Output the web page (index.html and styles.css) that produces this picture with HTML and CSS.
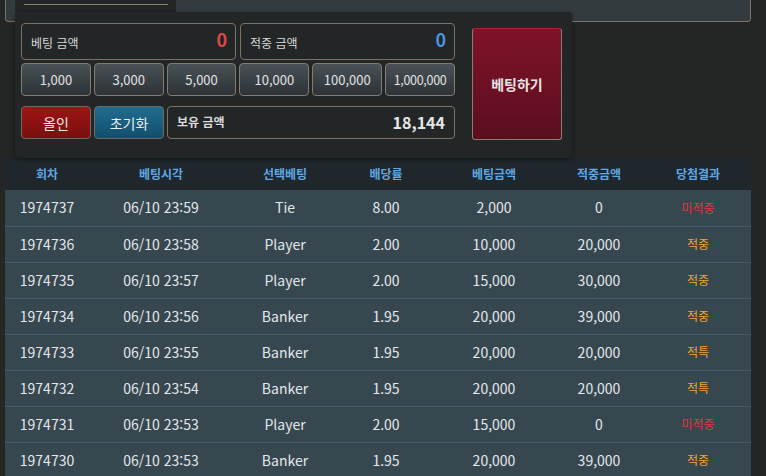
FILE: index.html
```html
<!DOCTYPE html>
<html lang="ko">
<head>
    <meta charset="UTF-8">
    <title>Betting</title>
    <link rel="stylesheet" href="styles.css">
</head>
<body>

<!-- Top strip (game area, cut off) -->
<div class="top-strip">
    <div class="top-tab"><div class="tab-line"></div></div>
</div>

<!-- Betting panel -->
<div class="bet-panel">
    <div class="bet-controls">
        <div class="amount-row">
            <div class="amount-box">
                <span class="amount-label">베팅 금액</span>
                <span class="amount-value red">0</span>
            </div>
            <div class="amount-box">
                <span class="amount-label">적중 금액</span>
                <span class="amount-value blue">0</span>
            </div>
        </div>
        <div class="chip-row">
            <button class="chip">1,000</button>
            <button class="chip">3,000</button>
            <button class="chip">5,000</button>
            <button class="chip">10,000</button>
            <button class="chip">100,000</button>
            <button class="chip small">1,000,000</button>
        </div>
        <div class="action-row">
            <button class="action-btn all-in">올인</button>
            <button class="action-btn reset">초기화</button>
            <div class="balance-box">
                <span class="balance-label">보유 금액</span>
                <span class="balance-value">18,144</span>
            </div>
        </div>
    </div>
    <button class="bet-button">베팅하기</button>
</div>

<!-- Betting history -->
<table class="history">
    <colgroup>
        <col style="width:84px"><col style="width:144px"><col style="width:104px"><col style="width:98px">
        <col style="width:118px"><col style="width:92px"><col style="width:106px">
    </colgroup>
    <thead>
        <tr>
            <th>회차</th><th>베팅시각</th><th>선택베팅</th><th>배당률</th><th>베팅금액</th><th>적중금액</th><th>당첨결과</th>
        </tr>
    </thead>
    <tbody>
        <tr><td>1974737</td><td>06/10 23:59</td><td>Tie</td><td>8.00</td><td>2,000</td><td>0</td><td class="lose">미적중</td></tr>
        <tr><td>1974736</td><td>06/10 23:58</td><td>Player</td><td>2.00</td><td>10,000</td><td>20,000</td><td class="win">적중</td></tr>
        <tr><td>1974735</td><td>06/10 23:57</td><td>Player</td><td>2.00</td><td>15,000</td><td>30,000</td><td class="win">적중</td></tr>
        <tr><td>1974734</td><td>06/10 23:56</td><td>Banker</td><td>1.95</td><td>20,000</td><td>39,000</td><td class="win">적중</td></tr>
        <tr><td>1974733</td><td>06/10 23:55</td><td>Banker</td><td>1.95</td><td>20,000</td><td>20,000</td><td class="win">적특</td></tr>
        <tr><td>1974732</td><td>06/10 23:54</td><td>Banker</td><td>1.95</td><td>20,000</td><td>20,000</td><td class="win">적특</td></tr>
        <tr><td>1974731</td><td>06/10 23:53</td><td>Player</td><td>2.00</td><td>15,000</td><td>0</td><td class="lose">미적중</td></tr>
        <tr><td>1974730</td><td>06/10 23:53</td><td>Banker</td><td>1.95</td><td>20,000</td><td>39,000</td><td class="win">적중</td></tr>
    </tbody>
</table>

</body>
</html>
```

FILE: styles.css
```css
/* General Reset */
* {
    margin: 0;
    padding: 0;
    box-sizing: border-box;
}

body {
    font-family: "Noto Sans CJK KR", "Noto Sans", sans-serif;
    background-color: #232625;
    color: #e3e8ec;
    font-size: 13px;
    line-height: 1.2;
}

/* Top strip */
.top-strip {
    height: 22px;
    margin: 0 15px 0 5px;
    background: #343b3e;
    border: 1px solid #7d7569;
    border-top: none;
    border-radius: 0 0 4px 4px;
    padding-left: 9px;
}

.top-tab {
    width: 161px;
    height: 12px;
    background: #222627;
    padding: 4px 8px 0 9px;
}

.tab-line {
    height: 1px;
    background: #8a7d69;
}

/* Betting panel */
.bet-panel {
    position: relative;
    display: flex;
    align-items: flex-start;
    width: 557px;
    margin: -10px 0 0 15px;
    padding: 11px 10px 18px 6px;
    background: #222627;
    border-radius: 4px;
    box-shadow: 0 1px 4px rgba(0, 0, 0, 0.45);
}

.bet-controls {
    width: 434px;
}

.amount-row {
    display: flex;
    gap: 4px;
}

.amount-box {
    flex: 1;
    height: 37px;
    display: flex;
    align-items: center;
    justify-content: space-between;
    padding: 0 8px 0 9px;
    border: 1px solid #7d7264;
    border-radius: 4px;
}

.amount-label {
    font-size: 12px;
    color: #d9d9d9;
    padding-top: 3px;
}

.amount-value {
    font-size: 18px;
    font-weight: bold;
    padding-bottom: 3px;
}

.amount-value.red {
    color: #e04646;
}

.amount-value.blue {
    color: #4d94dc;
}

.chip-row {
    display: flex;
    gap: 3px;
    margin-top: 3px;
}

.chip {
    flex: 1;
    height: 33px;
    font-family: inherit;
    font-size: 13px;
    color: #e2e2e2;
    background: linear-gradient(#4a5257, #2c3236);
    border: 1px solid #857c6f;
    border-radius: 4px;
}

.chip.small {
    font-size: 12.5px;
    letter-spacing: -0.3px;
}

.action-row {
    display: flex;
    gap: 3px;
    margin-top: 10px;
}

.action-btn {
    width: 70px;
    height: 33px;
    font-family: inherit;
    font-size: 14px;
    color: #ececec;
    border: 1px solid #6f6a62;
    border-radius: 4px;
}

.all-in {
    background: linear-gradient(#9d1414, #7a1010);
}

.reset {
    background: linear-gradient(#1f6d90, #134e6c);
}

.balance-box {
    flex: 1;
    height: 33px;
    display: flex;
    align-items: center;
    justify-content: space-between;
    padding: 0 9px 0 9px;
    border: 1px solid #7d7264;
    border-radius: 4px;
}

.balance-label {
    font-size: 12px;
    font-weight: bold;
    color: #dcdcdc;
}

.balance-value {
    font-size: 16px;
    font-weight: bold;
    color: #e6e6e6;
}

.bet-button {
    width: 90px;
    height: 112px;
    margin: 5px 0 0 17px;
    font-family: inherit;
    font-size: 14px;
    font-weight: bold;
    color: #ebe3e3;
    background: linear-gradient(#7f1329, #5a0e1d);
    border: 1px solid #8c7b70;
    border-top-color: #b81e2e;
    border-radius: 3px;
}

/* History table */
.history {
    width: 746px;
    margin-left: 5px;
    border-collapse: collapse;
    table-layout: fixed;
}

.history th {
    height: 32px;
    background: #1f262c;
    color: #5ea8e4;
    font-size: 12px;
    font-weight: bold;
    text-align: center;
}

.history td {
    height: 36px;
    background: #37474f;
    border-bottom: 1px solid #46596a;
    font-size: 14px;
    text-align: center;
}

.history td.lose {
    color: #e0393d;
    font-size: 12px;
}

.history td.win {
    color: #f0a431;
    font-size: 12px;
}
```
